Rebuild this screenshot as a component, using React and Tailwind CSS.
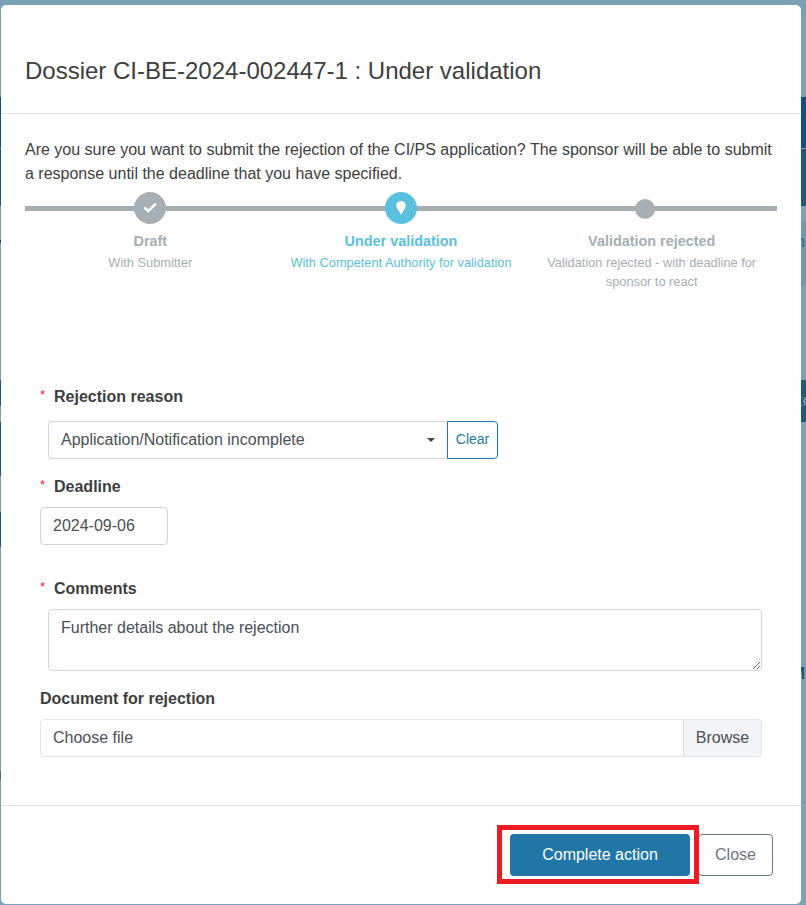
import React, { useState } from 'react'

const steps = [
  { title: 'Draft', text: 'With Submitter', state: 'done' },
  { title: 'Under validation', text: 'With Competent Authority for validation', state: 'active' },
  { title: 'Validation rejected', text: 'Validation rejected - with deadline for sponsor to react', state: 'todo' },
];

const StepMarker = ({ state }) => {
  if (state === 'todo') return (
    <div className="mt-0.5 mr-3.5 h-5 w-5 rounded-full bg-[#a5afb5]"></div>
  );

  return (
    <div className={`flex h-8 w-8 items-center justify-center rounded-full ${state === 'active' ? 'bg-[#5bc0de]' : 'bg-[#a5afb5]'}`}>
      {state === 'done' ? (
        <svg className="h-4 w-4" viewBox="0 0 16 16" fill="none">
          <path d="M2.4 7.6 L6.4 11 L13.8 3.6" stroke="white" strokeWidth="2.6" />
        </svg>
      ) : (
        <svg className="h-4 w-4" viewBox="0 0 16 16" fill="white">
          <path d="M8 1 C5.2 1 3.2 3 3.2 5.6 C3.2 8.5 6 11 7.2 13.6 C7.5 14.3 8.5 14.3 8.8 13.6 C10 11 12.8 8.5 12.8 5.6 C12.8 3 10.8 1 8 1 Z" />
        </svg>
      )}
    </div>
  );
}

const Stepper = () => (
  <div className="relative mt-1.5 h-[98px]">
    <div className="absolute inset-x-0 top-[14px] h-[5px] bg-[#a5afb3]"></div>
    <div className="relative grid grid-cols-3">
      {steps.map((step) => (
        <div key={step.title} className={`flex flex-col items-center text-center ${step.state === 'active' ? 'text-[#5bc0de]' : 'text-[#a5afb5]'}`}>
          <div className="flex h-8 items-center"><StepMarker state={step.state} /></div>
          <p className="mt-[7px] text-[14.4px] leading-5 font-bold">{step.title}</p>
          <p className="mt-0.5 w-[230px] text-[12.8px] leading-[19px]">{step.text}</p>
        </div>
      ))}
    </div>
  </div>
)

const Label = ({ required, children }) => (
  <label className="flex h-6 items-center font-bold text-[#3e3e3e]">
    {required && <span className="mb-1 w-3.5 text-[13px] font-normal text-[#f5222d]">*</span>}
    {children}
  </label>
)

// Edges of the page that stay visible round the dialog
const PageBehind = () => (
  <div className="flex h-full justify-between bg-[#7ba1b9]">
    <div className="flex w-1 flex-col">
      <div className="mt-[97px] h-[51px] bg-[#0d5088]"></div>
      <div className="mt-px h-[57px] bg-[#1f5a7a]"></div>
      <div className="mt-[34px] h-[3px] bg-[#1f4568]"></div>
      <div className="mt-[137px] h-[26px] bg-[#1f5a7a]"></div>
      <div className="mt-[16px] h-[54px] bg-[#1f5a7a]"></div>
      <div className="mt-[36px] h-[35px] bg-[#1f5a7a]"></div>
      <div className="mt-[224px] h-[9px] bg-[#44657c]"></div>
    </div>
    <div className="flex w-6 flex-col text-base">
      <div className="mt-[97px] h-[51px] bg-[#0d5088]"></div>
      <div className="mt-px h-[57px] bg-[#1f5a7a]"></div>
      <div className="mt-4 flex h-[64px] items-center justify-end bg-[#7198af] pr-px pb-6 text-[#2c678d]">n</div>
      <div className="mt-[94px] flex h-[42px] items-center overflow-hidden bg-[#1f5a7a] pl-4 text-[#7ba1b9]">te</div>
      <div className="mt-[240px] flex h-6 items-center justify-end pr-px font-bold text-[#1e5575]">M</div>
    </div>
  </div>
)

const App = () => {
  const [comments, setComments] = useState('Further details about the rejection');
  const [deadline, setDeadline] = useState('2024-09-06');

  return (
    <div className="relative h-[905px] w-[806px] overflow-hidden font-['Liberation_Sans',Arial,sans-serif] text-base text-[#3e3e3e]">
      <PageBehind />
      <div className="absolute inset-0 pt-[5px] pr-[5px] pb-px pl-px">
        <div className="flex h-full flex-col rounded-[5px] bg-white">
          <div className="flex h-[109px] items-center border-b border-[#dee2e6] px-6 pt-6">
            <h4 className="text-2xl">Dossier CI-BE-2024-002447-1 : Under validation</h4>
          </div>

          <div className="flex-1 px-6 pt-6">
            <p className="leading-6">
              Are you sure you want to submit the rejection of the CI/PS application? The sponsor will be able to submit a response until the deadline that you have specified.
            </p>
            <Stepper />

            <div className="mt-[95px] px-[15px] text-[#495057]">
              <Label required>Rejection reason</Label>
              <div className="mt-3 ml-2 flex">
                <button className="flex h-[38px] w-[399px] items-center justify-between rounded-l border border-r-0 border-[#ced4da] px-3">
                  <span>Application/Notification incomplete</span>
                  <svg className="h-1 w-2" viewBox="0 0 8 4" fill="#3f474e"><path d="M0 0 H8 L4 4 Z" /></svg>
                </button>
                <button className="h-[38px] w-[51px] rounded-r border border-[#2176a8] pb-0.5 text-sm text-[#2176a8]">Clear</button>
              </div>

              <div className="mt-4"><Label required>Deadline</Label></div>
              <input
                value={deadline}
                onChange={(e) => setDeadline(e.target.value)}
                className="mt-2 block h-[38px] w-32 rounded border border-[#ced4da] px-3"
              />

              <div className="mt-8"><Label required>Comments</Label></div>
              <textarea
                value={comments}
                onChange={(e) => setComments(e.target.value)}
                className="mt-2 ml-2 block h-[62px] w-[714px] resize-y rounded border border-[#ced4da] px-3 py-1.5 leading-6"
              />

              <div className="mt-4"><Label>Document for rejection</Label></div>
              <div className="mt-2 flex h-[38px] w-[722px] overflow-hidden rounded border border-[#e3e6e9]">
                <span className="flex flex-1 items-center pl-3">Choose file</span>
                <span className="flex w-[78px] items-center justify-center border-l border-[#dadde0] bg-[#f2f4f7]">Browse</span>
              </div>
            </div>
          </div>

          <div className="flex h-[99px] items-start justify-end border-t border-[#dee2e6] pt-[19px] pr-7">
            <div className="z-10 -mr-px h-[59px] w-[202px] border-5 border-[#ed1c24] bg-white pt-1 pl-2">
              <button className="h-[42px] w-[180px] rounded bg-[#2176a8] text-white">Complete action</button>
            </div>
            <button className="mt-[9px] h-[42px] w-[75px] rounded border border-[#6c757d] text-[#6c757d]">Close</button>
          </div>
        </div>
      </div>
    </div>
  )
}

export default App
